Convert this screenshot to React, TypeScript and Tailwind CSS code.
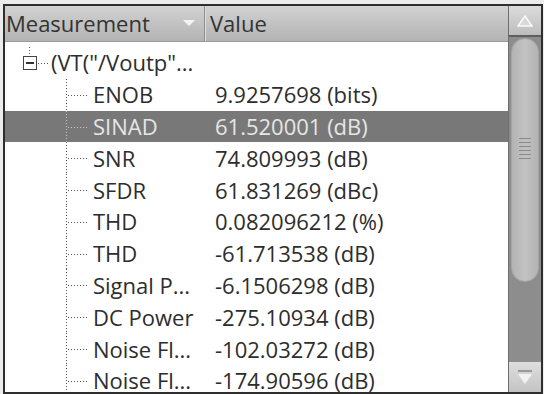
const rows = [
  { name: "ENOB", value: "9.9257698 (bits)" },
  { name: "SINAD", value: "61.520001 (dB)", selected: true },
  { name: "SNR", value: "74.809993 (dB)" },
  { name: "SFDR", value: "61.831269 (dBc)" },
  { name: "THD", value: "0.082096212 (%)" },
  { name: "THD", value: "-61.713538 (dB)" },
  { name: "Signal P...", value: "-6.1506298 (dB)" },
  { name: "DC Power", value: "-275.10934 (dB)" },
  { name: "Noise Fl...", value: "-102.03272 (dB)" },
  { name: "Noise Fl...", value: "-174.90596 (dB)" },
];

// dotted tree connector: vertical line on the left, branch to the right
const Connector = ({ selected }: { selected?: boolean }) => (
  <svg width="24" height="32" className="shrink-0 block">
    <line x1="0.5" y1="0" x2="0.5" y2="32" stroke={selected ? "#c8c8c8" : "#555"} strokeDasharray="1 2" />
    <line x1="2" y1="16.5" x2="22" y2="16.5" stroke={selected ? "#c8c8c8" : "#555"} strokeDasharray="1 2" />
  </svg>
);

const App = () => {
  return (
    <div className="w-[544px] h-[394px] bg-[#ececec] overflow-hidden pt-[4px] pl-[3px] font-['Open_Sans',sans-serif]">
      <div className="w-[540px] h-[390px] border-2 border-[#2e2e2e] flex bg-white">
        {/* list */}
        <div className="flex-1 flex flex-col overflow-hidden">
          <div className="h-[36px] shrink-0 flex bg-gradient-to-b from-[#d2d2d2] to-[#b3b3b3] border-b border-[#9a9a9a] text-[22px] text-[#333]">
            <div className="w-[200px] flex items-center pl-[1px] border-r border-[#8f8f8f]">
              <span>Measurement</span>
              <svg width="12" height="7" className="ml-auto mr-[9px]">
                <polygon points="0,0 12,0 6,6" fill="#f4f4f4" />
              </svg>
            </div>
            <div className="flex-1 flex items-center pl-[4px] border-l border-[#dcdcdc]">Value</div>
          </div>
          <div className="pt-[5px] text-[22px] text-[#2d2d2d]">
            <div className="h-[31.8px] flex items-center">
              <svg width="42" height="32" className="shrink-0 block ml-[17px]">
                <line x1="7.5" y1="0" x2="7.5" y2="9" stroke="#555" strokeDasharray="1 2" />
                <rect x="1.5" y="9.5" width="13" height="13" fill="none" stroke="#444" />
                <line x1="4" y1="16" x2="12" y2="16" stroke="#333" strokeWidth="2" />
                <line x1="16" y1="16.5" x2="26" y2="16.5" stroke="#555" strokeDasharray="1 2" />
              </svg>
              <span className="ml-[-13px] whitespace-nowrap">(VT("/Voutp"...</span>
            </div>
            {rows.map((r, i) => (
              <div
                key={i}
                className={`h-[31.8px] flex items-center ${r.selected ? "bg-[#787878] text-[#e6e6e6]" : ""}`}
              >
                <div className="ml-[61px]">
                  <Connector selected={r.selected} />
                </div>
                <span className="w-[125px] shrink-0 pl-[3px] whitespace-nowrap">{r.name}</span>
                <span className="whitespace-nowrap">{r.value}</span>
              </div>
            ))}
          </div>
        </div>
        {/* scrollbar */}
        <div className="w-[33px] shrink-0 flex flex-col bg-[#8d8d8d] border-l border-[#6e6e6e]">
          <div className="h-[31px] shrink-0 bg-gradient-to-b from-[#dcdcdc] to-[#bdbdbd] border-b-2 border-[#5e5e5e] flex items-center justify-center">
            <svg width="16" height="12">
              <polygon points="8,1 15,11 1,11" fill="#d8d8d8" stroke="#fafafa" strokeWidth="1.5" />
            </svg>
          </div>
          <div className="h-[244px] shrink-0 mx-[2px] mt-[1px] rounded-b-[14px] rounded-t-[14px] bg-gradient-to-r from-[#b3b3b3] via-[#c2c2c2] to-[#b3b3b3] border border-[#a5a5a5] flex items-center justify-center">
            <div className="flex flex-col gap-[3px] mt-[-24px]">
              {[0, 1, 2, 3, 4, 5].map((k) => (
                <div key={k} className="w-[12px] h-[1px] bg-[#8a8a8a]" />
              ))}
            </div>
          </div>
          <div className="flex-1" />
          <div className="h-[30px] shrink-0 bg-gradient-to-b from-[#dedede] to-[#c4c4c4] flex flex-col items-center justify-center">
            <div className="w-[14px] h-[2px] bg-[#9a9a9a] mb-[2px]" />
            <svg width="16" height="11">
              <polygon points="1,0 15,0 8,10" fill="#f2f2f2" />
            </svg>
          </div>
        </div>
      </div>
    </div>
  );
};

export default App;
